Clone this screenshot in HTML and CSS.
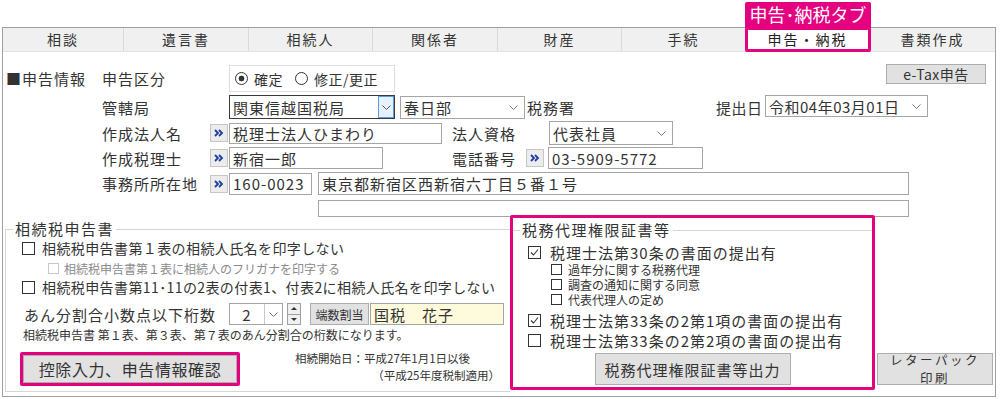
FILE: index.html
```html
<!DOCTYPE html>
<html lang="ja">
<head>
<meta charset="UTF-8">
<title>申告・納税</title>
<link rel="stylesheet" href="styles.css">
</head>
<body>
<div class="frame">
  <div class="tabs">
    <div class="tab">相談</div>
    <div class="tab">遺言書</div>
    <div class="tab">相続人</div>
    <div class="tab">関係者</div>
    <div class="tab">財産</div>
    <div class="tab">手続</div>
    <div class="tab on">申告・納税<span class="callout">申告･納税タブ</span></div>
    <div class="tab">書類作成</div>
  </div>

  <!-- 申告情報 -->
  <div class="info">
    <div class="row r1">
      <div class="head">■申告情報</div>
      <div class="lbl">申告区分</div>
      <div class="radios">
        <span class="radio on"></span><span class="rtxt">確定</span>
        <span class="radio"></span><span class="rtxt">修正/更正</span>
      </div>
      <div class="btn etax">e-Tax申告</div>
    </div>
    <div class="row r2">
      <div class="lbl">管轄局</div>
      <div class="fld sel focus w-kyoku"><span class="val">関東信越国税局</span><span class="drop"><svg width="9" height="5" viewBox="0 0 9 5"><polyline points="0.5,0.5 4.5,4.5 8.5,0.5" fill="none" stroke="#555" stroke-width="1"/></svg></span></div>
      <div class="fld sel w-sho"><span class="val">春日部</span><svg class="chev" width="9" height="5" viewBox="0 0 9 5"><polyline points="0.5,0.5 4.5,4.5 8.5,0.5" fill="none" stroke="#777" stroke-width="1"/></svg></div>
      <div class="txt zeimusho">税務署</div>
      <div class="txt teishutsu">提出日</div>
      <div class="fld sel w-date"><span class="val">令和04年03月01日</span><svg class="chev" width="9" height="5" viewBox="0 0 9 5"><polyline points="0.5,0.5 4.5,4.5 8.5,0.5" fill="none" stroke="#777" stroke-width="1"/></svg></div>
    </div>
    <div class="row r3">
      <div class="lbl s">作成法人名</div>
      <div class="go"><svg width="10" height="8" viewBox="0 0 10 8"><polyline points="1,1 4,4 1,7" fill="none" stroke="#1d3d9e" stroke-width="1.8"/><polyline points="5,1 8,4 5,7" fill="none" stroke="#1d3d9e" stroke-width="1.8"/></svg></div>
      <div class="fld w-corp">税理士法人ひまわり</div>
      <div class="txt shikaku">法人資格</div>
      <div class="fld sel w-shikaku"><span class="val">代表社員</span><svg class="chev" width="9" height="5" viewBox="0 0 9 5"><polyline points="0.5,0.5 4.5,4.5 8.5,0.5" fill="none" stroke="#777" stroke-width="1"/></svg></div>
    </div>
    <div class="row r4">
      <div class="lbl s">作成税理士</div>
      <div class="go"><svg width="10" height="8" viewBox="0 0 10 8"><polyline points="1,1 4,4 1,7" fill="none" stroke="#1d3d9e" stroke-width="1.8"/><polyline points="5,1 8,4 5,7" fill="none" stroke="#1d3d9e" stroke-width="1.8"/></svg></div>
      <div class="fld w-name">新宿一郎</div>
      <div class="txt tel">電話番号</div>
      <div class="go"><svg width="10" height="8" viewBox="0 0 10 8"><polyline points="1,1 4,4 1,7" fill="none" stroke="#1d3d9e" stroke-width="1.8"/><polyline points="5,1 8,4 5,7" fill="none" stroke="#1d3d9e" stroke-width="1.8"/></svg></div>
      <div class="fld w-tel">03-5909-5772</div>
    </div>
    <div class="row r5">
      <div class="lbl s">事務所所在地</div>
      <div class="go"><svg width="10" height="8" viewBox="0 0 10 8"><polyline points="1,1 4,4 1,7" fill="none" stroke="#1d3d9e" stroke-width="1.8"/><polyline points="5,1 8,4 5,7" fill="none" stroke="#1d3d9e" stroke-width="1.8"/></svg></div>
      <div class="fld w-zip">160-0023</div>
      <div class="fld w-addr">東京都新宿区西新宿六丁目５番１号</div>
    </div>
    <div class="row r6">
      <div class="fld w-addr2"></div>
    </div>
  </div>

  <div class="lower">
    <!-- 相続税申告書 -->
    <fieldset class="grp left">
      <legend>相続税申告書</legend>
      <div class="cb-row">
        <span class="cb"></span><span class="ctxt">相続税申告書第１表の相続人氏名を印字しない</span>
      </div>
      <div class="cb-row sub off">
        <span class="cb"></span><span class="ctxt">相続税申告書第１表に相続人のフリガナを印字する</span>
      </div>
      <div class="cb-row">
        <span class="cb"></span><span class="ctxt">相続税申告書第11･11の2表の付表1、付表2に相続人氏名を印字しない</span>
      </div>
      <div class="anbun">
        <div class="alabel">あん分割合小数点以下桁数</div>
        <div class="fld keta"><span class="kval">2</span><span class="kdrop"><svg width="9" height="5" viewBox="0 0 9 5"><polyline points="0.5,0.5 4.5,4.5 8.5,0.5" fill="none" stroke="#777" stroke-width="1"/></svg></span></div>
        <div class="spin"><span class="up"></span><span class="dn"></span></div>
        <div class="btn hasu">端数割当</div>
        <div class="fld heir">国税　花子</div>
      </div>
      <div class="note">相続税申告書 第１表、第３表、第７表のあん分割合の桁数になります。</div>
      <div class="foot">
        <div class="mark"><div class="btn kojo">控除入力、申告情報確認</div></div>
        <div class="start">
          <div>相続開始日：平成27年1月1日以後</div>
          <div class="ra">（平成25年度税制適用）</div>
        </div>
      </div>
    </fieldset>

    <!-- 税務代理権限証書等 -->
    <div class="pink">
      <fieldset class="grp agent">
        <legend>税務代理権限証書等</legend>
        <div class="cb-row big">
          <span class="cb"><svg width="11" height="11" viewBox="0 0 11 11"><polyline points="2,5.5 4.5,8 9,2.5" fill="none" stroke="#333" stroke-width="1.1"/></svg></span><span class="ctxt">税理士法第30条の書面の提出有</span>
        </div>
        <div class="cb-row mini"><span class="cb"></span><span class="ctxt">過年分に関する税務代理</span></div>
        <div class="cb-row mini"><span class="cb"></span><span class="ctxt">調査の通知に関する同意</span></div>
        <div class="cb-row mini"><span class="cb"></span><span class="ctxt">代表代理人の定め</span></div>
        <div class="cb-row big">
          <span class="cb"><svg width="11" height="11" viewBox="0 0 11 11"><polyline points="2,5.5 4.5,8 9,2.5" fill="none" stroke="#333" stroke-width="1.1"/></svg></span><span class="ctxt">税理士法第33条の2第1項の書面の提出有</span>
        </div>
        <div class="cb-row big2">
          <span class="cb"></span><span class="ctxt">税理士法第33条の2第2項の書面の提出有</span>
        </div>
        <div class="btn out">税務代理権限証書等出力</div>
      </fieldset>
    </div>

    <div class="btn letter"><span>レターパック</span><span>印刷</span></div>
  </div>
</div>
</body>
</html>
```

FILE: styles.css
```css
*{ box-sizing:border-box;}
html,body{ width:1001px; height:399px; margin:0; padding:0; background:#fff; overflow:hidden;}
body{ font-family:"Noto Sans CJK JP","Noto Sans",sans-serif; font-size:15px; color:#333; letter-spacing:1px;}

.frame{ width:994px; height:370px; margin:27px 0 0 2px; border:1px solid #a0a0a0;}

/* tabs */
.tabs{ display:grid; grid-template-columns:121px 125px 124px 125px 124px 124px 124px 1fr; height:24px; background:#f0f0f0; border-bottom:1px solid #e2e2e2;}
.tab{ border-right:1px solid #d9d9d9; text-align:center; font-size:14px; line-height:23px; letter-spacing:2px; color:#333;}
.tab:last-child{ border-right:none;}
.tab.on{ position:relative; background:#fff; color:#222;}
.tab.on::after{ content:""; position:absolute; left:-1px; right:-2px; top:-1px; bottom:-1px; border:3px solid #e4007f; border-radius:2px;}
.callout{ position:absolute; left:-1px; right:-2px; bottom:100%; height:26px; background:#e4007f; color:#fff; font-size:18px; line-height:25px; letter-spacing:0; border-radius:2px 2px 0 0;}

/* 申告情報 */
.info{ padding-top:12px;}
.row{ display:flex; align-items:center; padding-left:99px; white-space:nowrap;}
.r1{ height:28px; padding-left:0;}
.r2{ height:24px; margin-top:3px;}
.r3{ height:24px; margin-top:2px;}
.r4{ height:22px; margin-top:2px;}
.r5{ height:23px; margin-top:3px;}
.r6{ height:17px; margin-top:5px; padding-left:315px;}
.head{ width:99px; padding-left:3px; flex:none;}
.lbl{ width:127px; flex:none;}
.lbl.s{ width:108px;}
.txt{ flex:none;}

.radios{ display:flex; align-items:center; width:166px; height:27px; margin-top:1px; padding-left:5px; border:1px solid #dedede; font-size:14px;}
.radio{ width:13px; height:13px; border:1px solid #333; border-radius:50%; background:#fff; flex:none;}
.radio.on{ background:radial-gradient(circle, #333 0 2.6px, #fff 3.2px);}
.rtxt{ margin:0 12px 0 6px; letter-spacing:0.5px;}

.btn{ background:#e1e1e1; border:1px solid #adadad; display:flex; align-items:center; justify-content:center; text-align:center; color:#333;}
.etax{ width:100px; height:20px; margin:0 9px 0 auto; align-self:flex-start; font-size:14px; letter-spacing:0.5px;}

.fld{ border:1px solid #a5a5a5; background:#fff; display:flex; align-items:center; padding-left:3px; overflow:hidden; flex:none;}
.sel .val{ flex:1;}
.sel .chev{ margin:0 6px 0 4px; flex:none;}
.focus{ border-color:#3a3a3a;}
.drop{ width:16px; align-self:stretch; background:#e5f1fb; border:1px solid #5b9ee0; display:flex; align-items:center; justify-content:center;}
.w-kyoku{ width:166px; height:24px; padding-right:0;}
.w-sho{ width:125px; height:23px; margin-left:5px;}
.zeimusho{ margin-left:2px;}
.teishutsu{ margin-left:141px; width:49px; letter-spacing:0.5px;}
.w-date{ width:163px; height:22px; align-self:flex-start; letter-spacing:0.5px;}

.go{ width:18px; height:18px; margin-right:1px; border:1px solid #c6c6c6; background:#ececec; display:flex; align-items:center; justify-content:center; flex:none;}
.w-corp{ width:213px; height:21px;}
.shikaku{ margin-left:10px; width:97px;}
.w-shikaku{ width:124px; height:24px;}
.w-name{ width:154px; height:22px;}
.tel{ margin-left:69px; width:74px;}
.r4 .tel + .go{ margin-right:4px;}
.w-tel{ width:155px; height:22px;}
.w-zip{ width:83px; height:22px; margin-right:6px;}
.w-addr{ width:591px; height:23px;}
.w-addr2{ width:591px; height:17px;}

/* lower groups */
.lower{ display:flex; align-items:flex-start; margin-top:-2px; height:180px;}
.grp{ margin:0; padding:0; min-width:0; border:1px solid #d5d5d5;}
.grp legend{ padding:0 2px; font-size:15px; line-height:18px; letter-spacing:1.5px;}
.left{ width:505px; height:172px; margin:5px 0 0 2px; border-right:none;}
.left legend{ margin-left:7px;}

.cb-row{ display:flex; align-items:center; height:20px; padding-left:16px; white-space:nowrap; font-size:14px; letter-spacing:0.4px;}
.cb{ width:13px; height:13px; border:1px solid #333; background:#fff; display:flex; align-items:center; justify-content:center; flex:none;}
.ctxt{ margin-left:7px;}
.cb-row.sub{ height:18px; margin-top:1px; padding-left:42px; font-size:12px; letter-spacing:0;}
.cb-row.sub .cb{ width:11px; height:11px;}
.cb-row.sub .ctxt{ margin-left:5px;}
.off{ color:#8a8a8a;}
.off .cb{ border-color:#c8c8c8;}

.anbun{ display:flex; align-items:center; height:22px; margin-top:6px; padding-left:16px; white-space:nowrap;}
.alabel{ width:207px; padding-left:2px; flex:none;}
.keta{ width:54px; height:22px; padding-left:0;}
.kval{ flex:1; text-align:center;}
.kdrop{ width:18px; align-self:stretch; border-left:1px solid #c8c8c8; display:flex; align-items:center; justify-content:center;}
.spin{ display:flex; flex-direction:column; width:14px; height:22px; margin-left:4px; flex:none;}
.spin span{ flex:1; border:1px solid #a0a0a0; background:#f0f0f0; display:flex; align-items:center; justify-content:center;}
.spin .dn{ border-top:none;}
.spin .up::before{ content:""; border-left:3px solid transparent; border-right:3px solid transparent; border-bottom:3px solid #333;}
.spin .dn::before{ content:""; border-left:3px solid transparent; border-right:3px solid transparent; border-top:3px solid #333;}
.hasu{ width:59px; height:22px; margin-left:9px; font-size:12px; letter-spacing:0; flex:none;}
.heir{ width:134px; height:22px; margin-left:1px; background:#fdfbdc;}

.note{ margin-top:2px; padding-left:17px; font-size:12px; line-height:16px; letter-spacing:0; white-space:nowrap;}
.foot{ display:flex; margin-top:9px;}
.mark{ width:220px; height:34px; margin-left:14px; border:3px solid #e4007f; border-radius:2px; flex:none;}
.kojo{ height:100%; font-size:16px; letter-spacing:0.6px;}
.start{ width:205px; margin:-2px 0 0 55px; font-size:11.5px; line-height:16.8px; letter-spacing:0; white-space:nowrap;}
.start .ra{ text-align:right;}

.pink{ width:365px; height:175px; border:3px solid #e4007f; border-radius:2px; background:#fff; flex:none;}
.agent{ margin:3px 0 0 0; border-left:none; border-right:none; border-bottom:none;}
.agent legend{ margin-left:7px;}
.cb-row.big{ margin-top:3px; padding-left:15px; font-size:15px; letter-spacing:1px;}
.cb-row.big2{ padding-left:15px; font-size:15px; letter-spacing:1px;}
.cb-row.big .ctxt, .cb-row.big2 .ctxt{ margin-left:9px;}
.cb-row.mini{ height:15px; padding-left:38px; font-size:12px; letter-spacing:0;}
.cb-row.mini .cb{ width:11px; height:11px;}
.cb-row.mini .ctxt{ margin-left:6px;}
.out{ width:196px; height:32px; margin:3px auto 0; letter-spacing:1px;}

.letter{ flex-direction:column; width:116px; height:32px; margin:138px 0 0 2px; font-size:12.5px; line-height:18.2px; letter-spacing:2.5px; flex:none;}
```
